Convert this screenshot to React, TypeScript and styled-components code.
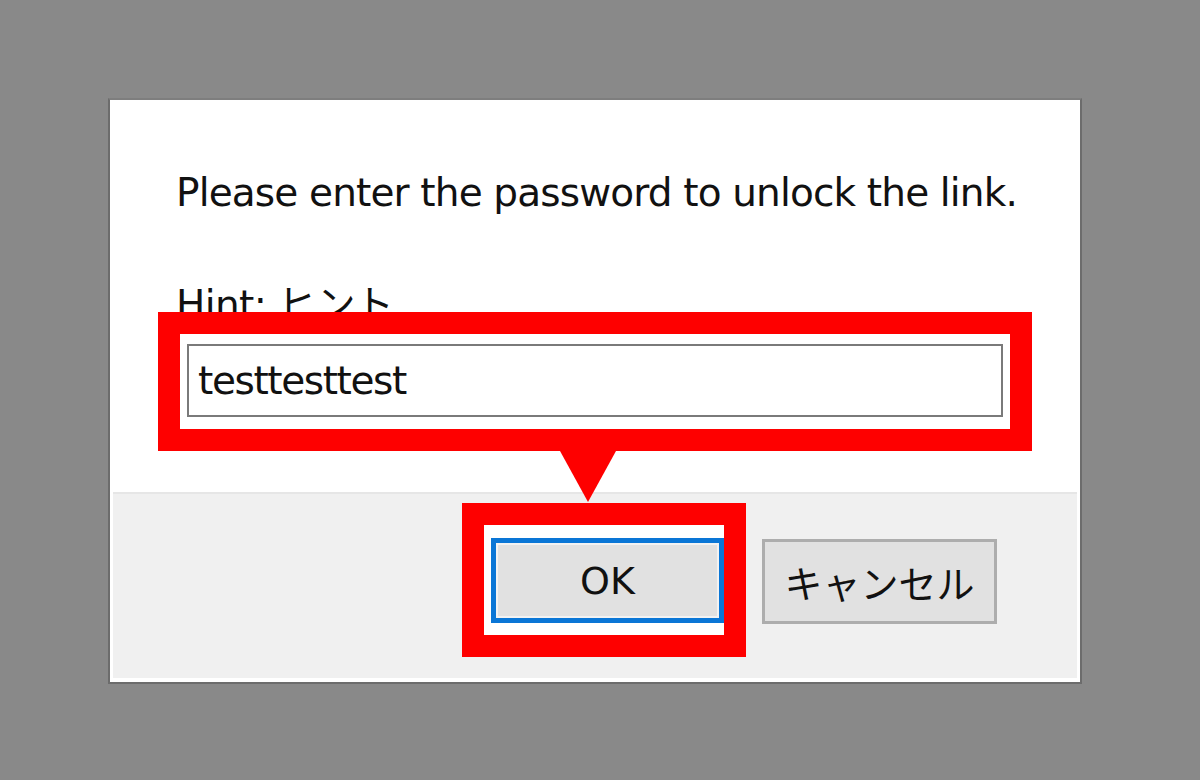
import React from "react";
import styled, { createGlobalStyle } from "styled-components";

const GlobalStyle = createGlobalStyle`
  html, body {
    margin: 0;
    padding: 0;
    background: #898989;
    width: 1200px;
    height: 780px;
    overflow: hidden;
  }
  body {
    font-family: "DejaVu Sans", "Noto Sans CJK JP", sans-serif;
  }
`;

const Page = styled.div`
  padding: 98px 0 0 108px;
`;

const Dialog = styled.div`
  box-sizing: border-box;
  width: 974px;
  height: 586px;
  background: #ffffff;
  border: 2px solid #6c6c6c;
  border-top-color: #7e7e7e;
  display: flex;
  flex-direction: column;
  padding: 0 3px 4px 3px;
`;

const Body = styled.div`
  flex: 1;
  padding: 70px 0 0 63px;
  font-size: 39px;
  line-height: 46px;
  color: #111;
`;

const Message = styled.div`
  white-space: nowrap;
  letter-spacing: -0.85px;
`;

const Hint = styled.div`
  margin-top: 66px;
  white-space: nowrap;
  letter-spacing: -0.6px;
  font-family: "DejaVu Sans", "Noto Sans CJK JP", sans-serif;
`;

const Highlight = styled.div<{ $pad: string }>`
  position: relative;
  box-sizing: border-box;
  border: 22px solid #fe0000;
  background: #ffffff;
  padding: ${(p) => p.$pad};
  z-index: 2;
`;

const InputHighlight = styled(Highlight)`
  width: 874px;
  margin: -16px 0 0 -18px;
`;

const Pointer = styled.div`
  position: absolute;
  left: 380px;
  top: calc(100% + 22px);
  width: 0;
  height: 0;
  border-left: 28px solid transparent;
  border-right: 28px solid transparent;
  border-top: 51px solid #fe0000;
`;

const Input = styled.div`
  box-sizing: border-box;
  width: 100%;
  height: 73px;
  border: 2px solid #7a7a7a;
  padding: 0 9px;
  display: flex;
  align-items: center;
  font-size: 39px;
  letter-spacing: -1.4px;
  color: #111;
  background: #fff;
`;

const Footer = styled.div`
  box-sizing: border-box;
  height: 186px;
  background: #f0f0f0;
  border-top: 2px solid #e6e6e6;
  padding: 9px 80px 0 0;
  display: flex;
  justify-content: flex-end;
  align-items: flex-start;
  gap: 16px;
`;

const Button = styled.div<{ $focused?: boolean }>`
  box-sizing: border-box;
  width: ${(p) => (p.$focused ? "233px" : "235px")};
  height: 85px;
  background: #e1e1e1;
  border: ${(p) => (p.$focused ? "5px solid #0a76d6" : "3px solid #adadad")};
  box-shadow: ${(p) => (p.$focused ? "inset 0 0 0 2px #f2f2f2" : "none")};
  display: flex;
  align-items: center;
  justify-content: center;
  font-size: 38px;
  color: #111;
  font-family: "DejaVu Sans", "Noto Sans CJK JP", sans-serif;
`;

const CancelButton = styled(Button)`
  margin-top: 36px;
  font-family: "Noto Sans CJK JP", sans-serif;
`;

export default function App() {
  return (
    <>
      <GlobalStyle />
      <Page>
        <Dialog>
          <Body>
            <Message>Please enter the password to unlock the link.</Message>
            <Hint>Hint: ヒント</Hint>
            <InputHighlight $pad="10px 7px 12px 7px">
              <Input>testtesttest</Input>
              <Pointer />
            </InputHighlight>
          </Body>
          <Footer>
            <Highlight $pad="13px 0 12px 7px">
              <Button $focused>OK</Button>
            </Highlight>
            <CancelButton>キャンセル</CancelButton>
          </Footer>
        </Dialog>
      </Page>
    </>
  );
}
